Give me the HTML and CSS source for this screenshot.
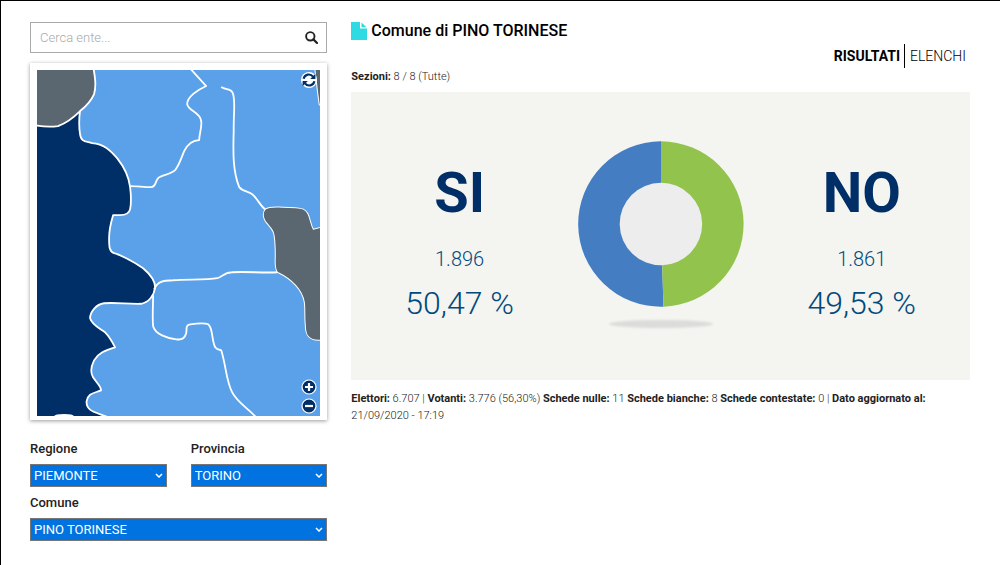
FILE: index.html
```html
<!DOCTYPE html>
<html lang="it">
<head>
  <meta charset="UTF-8" />
  <meta name="viewport" content="width=device-width, initial-scale=1.0"/>
  <title>Comune di PINO TORINESE - Risultati</title>
  <link rel="stylesheet" href="styles.css">
</head>
<body>
  <div class="container">

    <!-- Colonna sinistra: ricerca, mappa, filtri -->
    <aside class="sidebar">
      <form class="search">
        <input type="text" class="search-input" placeholder="Cerca ente..." aria-label="Cerca ente" />
        <button type="button" class="search-btn" aria-label="Cerca">
          <svg viewBox="0 0 13 13" width="13" height="13"><circle cx="5.3" cy="5.3" r="4.2" fill="none" stroke="#222" stroke-width="1.9"/><path d="M8.4 8.4L12 12" stroke="#222" stroke-width="2.2" stroke-linecap="round"/></svg>
        </button>
      </form>

      <div class="map">
        <svg class="map-img" viewBox="37 70 283 346" role="img" aria-label="Mappa dei comuni">
          <rect x="37" y="70" width="283" height="346" fill="#5aa1e9"/>
          <g stroke="#fff" stroke-width="1.8" stroke-linejoin="round">
            <path fill="#002e67" d="M30 110H80C79 118 79 128 80 134C81 142 85 141 92 143C104 144 110 150 117 158C125 168 129 179 130 187C131 195 131 204 130 209C129 214 124 215 120 215H113C110 225 109 232 109 238C109 246 109 251 114 253C124 256 134 262 143 268C150 274 155 281 155 287C154 295 149 302 141 303.500C128 304 116 302 104 303C96 304 90 312 90 318C92 325 100 328 105 332C110 337 112 341 115 347C105 350 98 353 94 360C91 366 90 372 93 377C97 383 101 386 101 390C93 393 88 393 86.500 401C86 411 96 412 106 416V430H30Z"/>
            <path fill="#5b6770" d="M30 60H92C94 72 97 84 94 94C91 101 85 107 80 111C73 118 66 123 58 126C51 127 43 126.500 37 125.500H30Z"/>
            <path fill="#5b6770" stroke-width="1" d="M265 209C269 206 276 207 283 207C291 207 298 207 303 209C310 212 309 222 313 229L325 226V340H318C307 340 305 333 305 325C304 316 305 309 304 302C302 290 292 279 277 272C274 267 275 262 275 256C275 248 275 238 273 232C270 225 263 222 263 215C263 212 263 211 265 209Z"/>
            <path fill="#5b6770" stroke-width="1" d="M314 65C316 80 317 92 319 105H325V65Z"/>
            <g fill="none">
              <path d="M190.500 69L206 86C197 90 187 97 187 104C188 111 200 112 201 121C202 127 199 134 199 140C191 140 187 145 184 151C181 158 179 165 175 170C169 175 161 175 158 178C155 181 156 187 151 187C144 187 137 186 130 186"/>
              <path d="M221 87C225 90 230 88 232 92C236 98 233 115 233.500 130C233 148 232 170 239 187C243 192 249 191 253 195C258 200 261 207 265 209"/>
              <path d="M154 289C157 282 162 280 173 280C188 279 207 280 217 278C223 276 224 272 232 272C246 271 263 273 277 272"/>
              <path d="M153 295C153 305 152 317 153 326C155 334 167 338 176 339C182 340 185 337 186 333C187 328 185 325 190 324C197 323 204 322 208 324C213 328 211 339 215 347C217 350 219 349 221 350C226 366 226 381 232 392C237 402 248 408 256 417"/>
            </g>
          </g>
          <ellipse cx="64" cy="416" rx="10" ry="2.500" fill="#fff"/>
        </svg>
        <button type="button" class="map-btn map-reset" aria-label="Ripristina">
          <svg viewBox="0 0 16 16"><circle cx="8" cy="8" r="8" fill="#fff"/><g fill="none" stroke="#002e67" stroke-width="2.200"><path d="M2.600 6.800A5.300 5.300 0 0 1 12 4.600"/><path d="M13.400 9.200A5.300 5.300 0 0 1 4 11.400"/></g><path fill="#002e67" d="M14.400 1.800V7H9.200ZM1.600 14.200V9H6.800Z"/></svg>
        </button>
        <div class="map-zoom">
          <button type="button" class="map-btn" aria-label="Ingrandisci">
            <svg viewBox="0 0 16 16"><circle cx="8" cy="8" r="7" fill="#002e67" stroke="#fff" stroke-width="1.200"/><path d="M8 4V12M4 8H12" stroke="#fff" stroke-width="2.200"/></svg>
          </button>
          <button type="button" class="map-btn" aria-label="Riduci">
            <svg viewBox="0 0 16 16"><circle cx="8" cy="8" r="7" fill="#002e67" stroke="#fff" stroke-width="1.200"/><path d="M4 8H12" stroke="#fff" stroke-width="2.200"/></svg>
          </button>
        </div>
      </div>

      <form class="filters">
        <div class="field">
          <label for="regione">Regione</label>
          <div class="select-box">
            <select id="regione"><option>PIEMONTE</option></select>
            <svg class="arrow" viewBox="0 0 8 5"><path d="M1 1L4 4L7 1"/></svg>
          </div>
        </div>
        <div class="field">
          <label for="provincia">Provincia</label>
          <div class="select-box">
            <select id="provincia"><option>TORINO</option></select>
            <svg class="arrow" viewBox="0 0 8 5"><path d="M1 1L4 4L7 1"/></svg>
          </div>
        </div>
        <div class="field field-wide">
          <label for="comune">Comune</label>
          <div class="select-box">
            <select id="comune"><option>PINO TORINESE</option></select>
            <svg class="arrow" viewBox="0 0 8 5"><path d="M1 1L4 4L7 1"/></svg>
          </div>
        </div>
      </form>
    </aside>

    <!-- Colonna destra: risultati -->
    <main class="content">
      <h1 class="title">
        <svg viewBox="0 0 16 18" width="16" height="18"><path fill="#2edbe2" d="M0 0H9V6.500H16V18H0Z"/><path fill="#2edbe2" d="M10.500 0.500L15.500 5.300H10.500Z"/></svg>
        Comune di PINO TORINESE
      </h1>
      <nav class="tabs">
        <a href="#" class="active">RISULTATI</a>
        <a href="#">ELENCHI</a>
      </nav>
      <p class="info"><b>Sezioni:</b> 8 / 8 (Tutte)</p>

      <section class="results">
        <div class="result">
          <h2>SI</h2>
          <p class="votes">1.896</p>
          <p class="percent">50,47 %</p>
        </div>
        <svg class="chart" viewBox="0 0 166 190" width="166" height="190" role="img" aria-label="SI 50,47 %, NO 49,53 %">
          <defs>
            <filter id="soft" x="-10%" y="-60%" width="120%" height="220%"><feGaussianBlur stdDeviation="1"/></filter>
          </defs>
          <circle cx="83" cy="83" r="42" fill="#ededed"/>
          <path fill="#457dc2" d="M83 0.300A82.700 82.700 0 1 0 85.450 165.660L84.220 124.230A41.250 41.250 0 1 1 83 41.750Z"/>
          <path fill="#91c34d" d="M83 0.300A82.700 82.700 0 0 1 85.450 165.660L84.220 124.230A41.250 41.250 0 0 0 83 41.750Z"/>
          <ellipse cx="83" cy="183" rx="52" ry="4" fill="#dcddda" filter="url(#soft)"/>
        </svg>
        <div class="result">
          <h2>NO</h2>
          <p class="votes">1.861</p>
          <p class="percent">49,53 %</p>
        </div>
      </section>

      <p class="info"><b>Elettori:</b> 6.707 | <b>Votanti:</b> 3.776 (56,30%) <b>Schede nulle:</b> 11 <b>Schede bianche:</b> 8 <b>Schede contestate:</b> 0 | <b>Dato aggiornato al:</b> 21/09/2020 - 17:19</p>
    </main>

  </div>
</body>
</html>
```

FILE: styles.css
```css
* {
  box-sizing: border-box;
}
body {
  margin: 0;
  min-height: 100vh;
  border-top: 1px solid #000;
  border-left: 1px solid #000;
  background: #fff;
  color: #222;
  font-family: Roboto, Arial, sans-serif;
  font-size: 13px;
}
h1, h2, p {
  margin: 0;
}
button {
  padding: 0;
  border: none;
  background: none;
  cursor: pointer;
}
.container {
  display: grid;
  grid-template-columns: repeat(12, 1fr);
  column-gap: 24px;
  padding: 21px 30px 20px 29px;
}

/* sidebar */
.sidebar {
  grid-column: span 4;
}
.search {
  display: flex;
  height: 31px;
  border: 1px solid #aaa;
}
.search-input {
  flex: 1;
  min-width: 0;
  padding: 0 9px;
  border: none;
  outline: none;
  background: none;
  font-family: inherit;
  font-size: 13px;
}
.search-input::placeholder {
  color: #aaa;
  font-weight: 300;
  opacity: 1;
}
.search-btn {
  display: flex;
  align-items: center;
  padding: 0 8px;
}
.map {
  position: relative;
  margin-top: 10px;
  padding: 7px 7px 4px;
  box-shadow: 0 1px 4px rgba(0, 0, 0, 0.4);
}
.map-img {
  display: block;
  width: 100%;
}
.map-btn {
  display: block;
  width: 16px;
  height: 16px;
}
.map-btn svg {
  display: block;
}
.map-reset {
  position: absolute;
  top: 9px;
  right: 10px;
}
.map-zoom {
  position: absolute;
  right: 10px;
  bottom: 6px;
  display: grid;
  gap: 3px;
}
.filters {
  display: grid;
  grid-template-columns: 1fr 1fr;
  gap: 6px 24px;
  margin-top: 19px;
}
.field-wide {
  grid-column: span 2;
}
.field label {
  display: block;
  margin-bottom: 5px;
  font-size: 13px;
  font-weight: 500;
  line-height: 20px;
}
.select-box {
  position: relative;
}
.select-box select {
  display: block;
  width: 100%;
  height: 23px;
  padding: 0 3px;
  border: 1px solid #767676;
  border-radius: 0;
  background: #0073e1;
  color: #fff;
  font-family: inherit;
  font-size: 13px;
  appearance: none;
}
.arrow {
  position: absolute;
  top: 9px;
  right: 4px;
  width: 8px;
  height: 5px;
  fill: none;
  stroke: #fff;
  stroke-width: 1.5;
  pointer-events: none;
}

/* risultati */
.content {
  grid-column: span 8;
}
.title {
  display: flex;
  align-items: center;
  gap: 4px;
  color: #000;
  font-size: 16px;
  font-weight: 500;
  line-height: 18px;
}
.tabs {
  display: flex;
  justify-content: flex-end;
  margin-top: 4px;
  padding-right: 4px;
}
.tabs a {
  padding-left: 5px;
  color: #000;
  font-size: 14px;
  font-weight: 300;
  line-height: 24px;
  text-decoration: none;
}
.tabs .active {
  padding-right: 4px;
  border-right: 1px solid #000;
  font-weight: 700;
}
.info {
  font-size: 11px;
  font-weight: 300;
  line-height: 17px;
}
.info b {
  font-weight: 700;
}
.results {
  display: grid;
  grid-template-columns: 35fr 30fr 35fr;
  align-items: center;
  justify-items: center;
  margin: 7px 0 10px;
  padding: 49px 0;
  background: #f4f4f0;
}
.result {
  padding-top: 14px;
  color: #004a7c;
  text-align: center;
  font-weight: 300;
}
.result h2 {
  color: #002e67;
  font-size: 56px;
  font-weight: 700;
  line-height: 60px;
}
.votes {
  margin-top: 24px;
  font-size: 20px;
  line-height: 24px;
}
.percent {
  margin-top: 12px;
  font-size: 32px;
  line-height: 40px;
}
```
